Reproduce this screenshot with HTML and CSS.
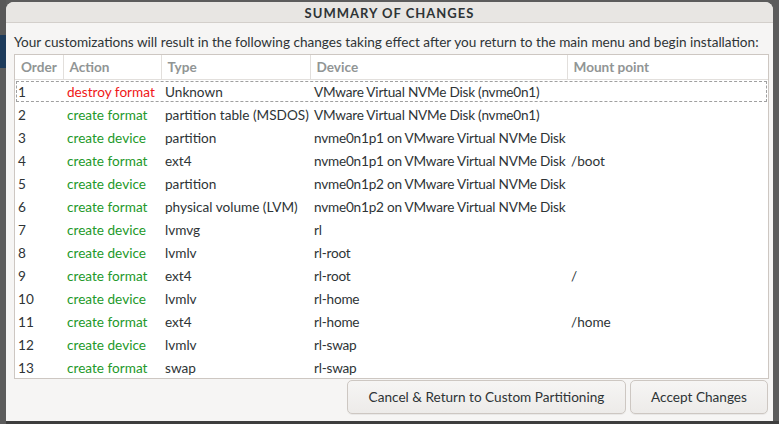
FILE: index.html
```html
<!DOCTYPE html>
<html>
<head>
<meta charset="utf-8">
<link rel="stylesheet" href="styles.css">
</head>
<body>
<div class="dialog">
  <div class="titlebar">SUMMARY OF CHANGES</div>
  <div class="content">
    <p class="desc">Your customizations will result in the following changes taking effect after you return to the main menu and begin installation:</p>
    <div class="tablebox">
      <table class="changes">
        <colgroup>
          <col class="c-order"><col class="c-action"><col class="c-type"><col class="c-device"><col class="c-mount">
        </colgroup>
        <thead>
          <tr><th>Order</th><th>Action</th><th>Type</th><th>Device</th><th>Mount point</th></tr>
        </thead>
        <tbody>
          <tr class="focused"><td>1</td><td class="destroy">destroy format</td><td>Unknown</td><td class="dev">VMware Virtual NVMe Disk (nvme0n1)</td><td></td></tr>
          <tr><td>2</td><td class="create">create format</td><td>partition table (MSDOS)</td><td class="dev">VMware Virtual NVMe Disk (nvme0n1)</td><td></td></tr>
          <tr><td>3</td><td class="create">create device</td><td>partition</td><td class="dev">nvme0n1p1 on VMware Virtual NVMe Disk</td><td></td></tr>
          <tr><td>4</td><td class="create">create format</td><td>ext4</td><td class="dev">nvme0n1p1 on VMware Virtual NVMe Disk</td><td>/boot</td></tr>
          <tr><td>5</td><td class="create">create device</td><td>partition</td><td class="dev">nvme0n1p2 on VMware Virtual NVMe Disk</td><td></td></tr>
          <tr><td>6</td><td class="create">create format</td><td>physical volume (LVM)</td><td class="dev">nvme0n1p2 on VMware Virtual NVMe Disk</td><td></td></tr>
          <tr><td>7</td><td class="create">create device</td><td>lvmvg</td><td class="dev">rl</td><td></td></tr>
          <tr><td>8</td><td class="create">create device</td><td>lvmlv</td><td class="dev">rl-root</td><td></td></tr>
          <tr><td>9</td><td class="create">create format</td><td>ext4</td><td class="dev">rl-root</td><td>/</td></tr>
          <tr><td>10</td><td class="create">create device</td><td>lvmlv</td><td class="dev">rl-home</td><td></td></tr>
          <tr><td>11</td><td class="create">create format</td><td>ext4</td><td class="dev">rl-home</td><td>/home</td></tr>
          <tr><td>12</td><td class="create">create device</td><td>lvmlv</td><td class="dev">rl-swap</td><td></td></tr>
          <tr><td>13</td><td class="create">create format</td><td>swap</td><td class="dev">rl-swap</td><td></td></tr>
        </tbody>
      </table>
    </div>
    <div class="buttons">
      <button class="btn btn-cancel">Cancel &amp; Return to Custom Partitioning</button>
      <button class="btn btn-accept">Accept Changes</button>
    </div>
  </div>
</div>
</body>
</html>
```
FILE: styles.css
```css
html, body {
  margin: 0;
  padding: 0;
}
body {
  width: 779px;
  height: 424px;
  overflow: hidden;
  background:
    linear-gradient(to bottom, #585858 0, #585858 35px, #1d3a5a 35px, #1d3a5a 68px, #5c5c5c 68px) no-repeat 0 0 / 6px 100%,
    linear-gradient(to bottom, #5c5c5c 0, #5c5c5c 421px, #3e3e3e 421px);
  font-family: Lato, "Noto Sans", sans-serif;
  font-size: 13.6px;
  color: #2e3436;
}
.dialog {
  margin: 2px 6px 0 6px;
  width: 767px;
  height: 419px;
  background: #f6f5f4;
  border-radius: 8px 8px 0 0;
  display: flex;
  flex-direction: column;
  overflow: hidden;
}
.titlebar {
  height: 20px;
  flex: none;
  background: #e8e6e3;
  border-bottom: 1px solid #d3cfcb;
  text-align: center;
  font-weight: bold;
  font-size: 13px;
  letter-spacing: 1px;
  line-height: 22px;
  color: #2e3436;
}
.content {
  padding: 0 4px 0 8px;
  display: flex;
  flex-direction: column;
}
.desc {
  margin: 9px 0 0 0;
  height: 22px;
  line-height: 20px;
  white-space: nowrap;
}
.tablebox {
  width: 753px;
  height: 323px;
  background: #ffffff;
  border: 1px solid #cdc7c2;
  overflow: hidden;
}
.changes {
  border-collapse: collapse;
  table-layout: fixed;
  width: 753px;
}
.c-order { width: 48px; }
.c-action { width: 98px; }
.c-type { width: 149px; }
.c-device { width: 257px; }
.c-mount { width: 201px; }
.changes th {
  height: 23px;
  padding: 0 0 1px 6px;
  text-align: left;
  font-weight: bold;
  color: #919595;
  border-right: 1px solid #e2dfdc;
  border-bottom: 1px solid #e2dfdc;
  white-space: nowrap;
}
.changes th:last-child { border-right: none; }
.changes td {
  height: 23px;
  padding: 0 0 0 4px;
  white-space: nowrap;
  overflow: hidden;
  color: #2e3436;
}
.changes td:first-child { padding-left: 3px; }
.changes td.dev { letter-spacing: -0.22px; }
.changes tr.focused {
  outline: 1px dashed #a0a0a0;
  outline-offset: -2px;
}
.changes tr.focused td { height: 22px; padding-top: 1px; }
.changes td.destroy { color: #f01616; }
.changes td.create { color: #23992a; }
.buttons {
  display: flex;
  justify-content: flex-end;
  gap: 4px;
  margin-top: 1px;
  padding-right: 1px;
}
.btn {
  height: 34px;
  font-family: Lato, "Noto Sans", sans-serif;
  font-size: 13.6px;
  color: #2e3436;
  background: linear-gradient(to bottom, #f6f5f4, #edebe9);
  border: 1px solid #cdc7c2;
  border-radius: 5px;
  padding: 0;
  box-shadow: 0 1px 0 rgba(0,0,0,0.05);
}
.btn-cancel { width: 279px; }
.btn-accept { width: 138px; }
```
